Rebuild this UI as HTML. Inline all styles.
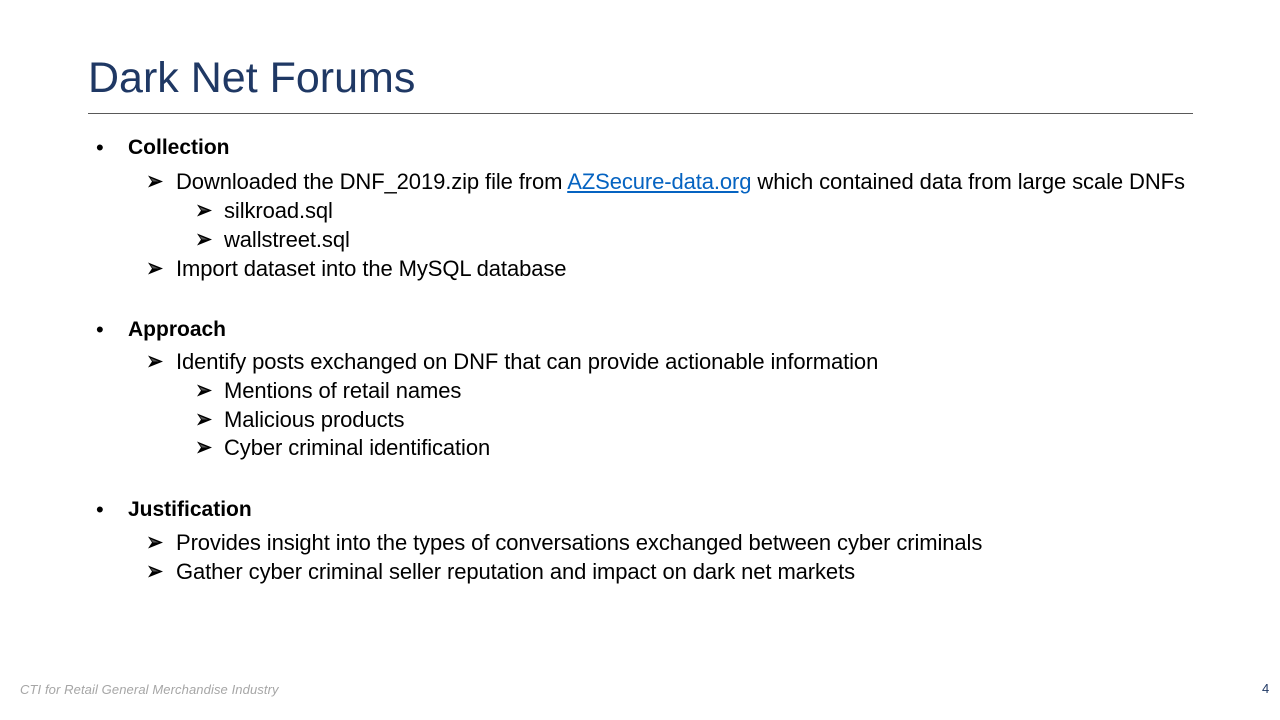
<!DOCTYPE html>
<html><head><meta charset="utf-8"><style>
body{margin:0;width:1280px;height:720px;background:#fff;position:relative;overflow:hidden;font-family:"Liberation Sans",sans-serif;color:#000}
.t{position:absolute;white-space:nowrap;font-size:22px;letter-spacing:-0.1px;line-height:24px}
.b{font-weight:bold;letter-spacing:0;font-size:21px}
.ar{position:absolute;width:15px;height:13px}
a{color:#0563c1;text-decoration:underline}
</style></head><body>
<svg width="0" height="0" style="position:absolute"><defs><symbol id="arw" viewBox="0 0 15 13"><polygon points="0,0.5 15,6.5 0,12.5 4,6.5" fill="#000"/><polygon points="2.5,3 11,6.5 5,6.5" fill="#fff" opacity="0.35"/></symbol></defs></svg>
<div style="position:absolute;left:88px;top:52px;font-size:43px;color:#1f3864;line-height:52px">Dark Net Forums</div>
<div style="position:absolute;left:88px;top:113px;width:1105px;height:1px;background:#595959"></div>

<div class="t" style="left:96px;top:136px">•</div><div class="t b" style="left:128px;top:136px">Collection</div>
<svg class="ar" style="left:148px;top:175px"><use href="#arw"/></svg><div class="t" style="left:176px;top:170px">Downloaded the DNF_2019.zip file from <a>AZSecure-data.org</a> which contained data from large scale DNFs</div>
<svg class="ar" style="left:197px;top:204px"><use href="#arw"/></svg><div class="t" style="left:224px;top:199px">silkroad.sql</div>
<svg class="ar" style="left:197px;top:233px"><use href="#arw"/></svg><div class="t" style="left:224px;top:228px">wallstreet.sql</div>
<svg class="ar" style="left:148px;top:262px"><use href="#arw"/></svg><div class="t" style="left:176px;top:257px">Import dataset into the MySQL database</div>

<div class="t" style="left:96px;top:318px">•</div><div class="t b" style="left:128px;top:318px">Approach</div>
<svg class="ar" style="left:148px;top:355px"><use href="#arw"/></svg><div class="t" style="left:176px;top:350px">Identify posts exchanged on DNF that can provide actionable information</div>
<svg class="ar" style="left:197px;top:384px"><use href="#arw"/></svg><div class="t" style="left:224px;top:379px">Mentions of retail names</div>
<svg class="ar" style="left:197px;top:413px"><use href="#arw"/></svg><div class="t" style="left:224px;top:408px">Malicious products</div>
<svg class="ar" style="left:197px;top:441px"><use href="#arw"/></svg><div class="t" style="left:224px;top:436px">Cyber criminal identification</div>

<div class="t" style="left:96px;top:498px">•</div><div class="t b" style="left:128px;top:498px">Justification</div>
<svg class="ar" style="left:148px;top:536px"><use href="#arw"/></svg><div class="t" style="left:176px;top:531px">Provides insight into the types of conversations exchanged between cyber criminals</div>
<svg class="ar" style="left:148px;top:565px"><use href="#arw"/></svg><div class="t" style="left:176px;top:560px">Gather cyber criminal seller reputation and impact on dark net markets</div>

<div style="position:absolute;left:20px;top:682px;font-size:13px;font-style:italic;color:#a6a6a6;line-height:16px;letter-spacing:0.1px">CTI for Retail General Merchandise Industry</div>
<div style="position:absolute;left:1262px;top:681px;font-size:13px;color:#1f3864;line-height:16px">4</div>
</body></html>
